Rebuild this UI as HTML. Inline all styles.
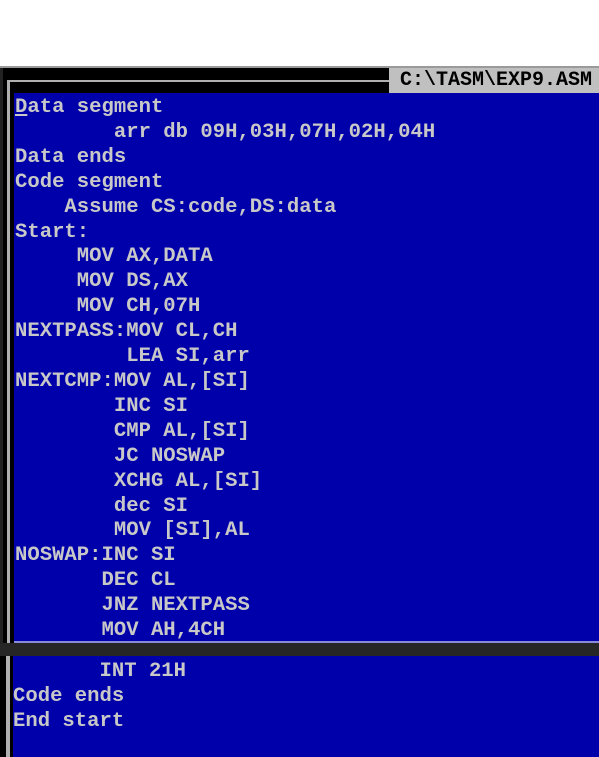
<!DOCTYPE html>
<html><head><meta charset="utf-8"><style>
body{margin:0;width:599px;height:757px;background:#fff;position:relative;overflow:hidden;font-family:"Liberation Mono",monospace;}
div{position:absolute;}
pre{margin:0;font-family:"Liberation Mono",monospace;font-size:20.6px;line-height:24.9px;color:#c8c8c8;font-weight:bold;letter-spacing:0;transform:scaleY(1.12);transform-origin:0 0;}
</style></head><body>
<div style="left:0;top:66px;width:599px;height:2px;background:#9a9a9a"></div>
<div style="left:0;top:68px;width:599px;height:575px;background:#000"></div>
<div style="left:0;top:68px;width:3px;height:575px;background:#222"></div>
<div style="left:7px;top:80px;width:383px;height:2px;background:#b0b0b0"></div>
<div style="left:7px;top:80px;width:3px;height:563px;background:#b0b0b0"></div>
<div style="left:389px;top:68px;width:210px;height:25px;background:#c0c0c0;color:#000;font-size:20px;font-weight:bold;line-height:25px;padding-left:11px;box-sizing:border-box">C:\TASM\EXP9.ASM</div>
<div style="left:14px;top:93px;width:585px;height:548px;background:#0000aa"></div>
<div style="left:14px;top:641px;width:585px;height:2px;background:#8a8ad8"></div>
<div style="left:0;top:643px;width:599px;height:13px;background:#262626"></div>
<div style="left:0;top:656px;width:599px;height:101px;background:#000"></div>
<div style="left:6px;top:656px;width:4px;height:101px;background:#b0b0b0"></div>
<div style="left:13px;top:656px;width:586px;height:101px;background:#0000aa"></div>
<div style="left:15px;top:93px;height:548px;overflow:hidden"><pre style="transform:none;margin-top:3px;font-size:20.6px"><u>D</u>ata segment
        arr db 09H,03H,07H,02H,04H
Data ends
Code segment
    Assume CS:code,DS:data
Start:
     MOV AX,DATA
     MOV DS,AX
     MOV CH,07H
NEXTPASS:MOV CL,CH
         LEA SI,arr
NEXTCMP:MOV AL,[SI]
        INC SI
        CMP AL,[SI]
        JC NOSWAP
        XCHG AL,[SI]
        dec SI
        MOV [SI],AL
NOSWAP:INC SI
       DEC CL
       JNZ NEXTPASS
       MOV AH,4CH</pre></div>
<div style="left:13px;top:660px"><pre style="transform:none">       INT 21H
Code ends
End start</pre></div>
</body></html>
